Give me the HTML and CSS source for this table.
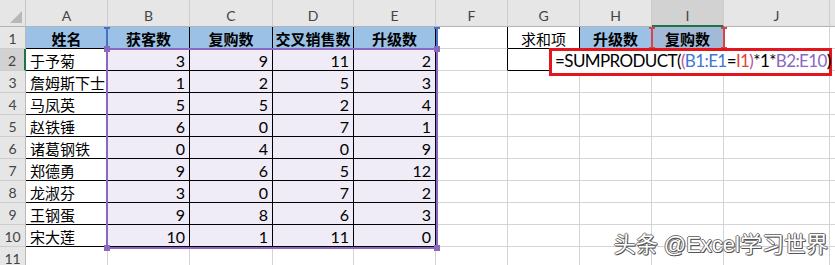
FILE: index.html
```html
<!DOCTYPE html>
<html lang="zh-CN">
<head>
<meta charset="utf-8">
<title>Sheet</title>
<link rel="stylesheet" href="styles.css">
</head>
<body>
<div class="sheet">
  <div class="corner"></div>
  <div class="ch">A</div><div class="ch">B</div><div class="ch">C</div><div class="ch">D</div><div class="ch">E</div><div class="ch">F</div><div class="ch">G</div><div class="ch">H</div><div class="ch sel">I</div><div class="ch">J</div><div class="ch">K</div>

  <div class="rh">1</div>
  <div class="c t hd">姓名</div><div class="c t hd">获客数</div><div class="c t hd">复购数</div><div class="c t hd">交叉销售数</div><div class="c t hd">升级数</div>
  <div class="c br"></div><div class="c t ctr">求和项</div><div class="c t hd">升级数</div><div class="c t hd hd2">复购数</div><div class="c"></div><div class="c"></div>

  <div class="rh sel">2</div>
  <div class="c t nm">于予菊</div><div class="c t n">3</div><div class="c t n">9</div><div class="c t n">11</div><div class="c t n">2</div>
  <div class="c br"></div><div class="c bb"></div><div class="c bb"></div><div class="c bb"></div><div class="c"></div><div class="c"></div>

  <div class="rh">3</div>
  <div class="c t nm">詹姆斯下士</div><div class="c t n">1</div><div class="c t n">2</div><div class="c t n">5</div><div class="c t n">3</div>
  <div class="c"></div><div class="c"></div><div class="c"></div><div class="c"></div><div class="c"></div><div class="c"></div>

  <div class="rh">4</div>
  <div class="c t nm">马凤英</div><div class="c t n">5</div><div class="c t n">5</div><div class="c t n">2</div><div class="c t n">4</div>
  <div class="c"></div><div class="c"></div><div class="c"></div><div class="c"></div><div class="c"></div><div class="c"></div>

  <div class="rh">5</div>
  <div class="c t nm">赵铁锤</div><div class="c t n">6</div><div class="c t n">0</div><div class="c t n">7</div><div class="c t n">1</div>
  <div class="c"></div><div class="c"></div><div class="c"></div><div class="c"></div><div class="c"></div><div class="c"></div>

  <div class="rh">6</div>
  <div class="c t nm">诸葛钢铁</div><div class="c t n">0</div><div class="c t n">4</div><div class="c t n">0</div><div class="c t n">9</div>
  <div class="c"></div><div class="c"></div><div class="c"></div><div class="c"></div><div class="c"></div><div class="c"></div>

  <div class="rh">7</div>
  <div class="c t nm">郑德勇</div><div class="c t n">9</div><div class="c t n">6</div><div class="c t n">5</div><div class="c t n">12</div>
  <div class="c"></div><div class="c"></div><div class="c"></div><div class="c"></div><div class="c"></div><div class="c"></div>

  <div class="rh">8</div>
  <div class="c t nm">龙淑芬</div><div class="c t n">3</div><div class="c t n">0</div><div class="c t n">7</div><div class="c t n">2</div>
  <div class="c"></div><div class="c"></div><div class="c"></div><div class="c"></div><div class="c"></div><div class="c"></div>

  <div class="rh">9</div>
  <div class="c t nm">王钢蛋</div><div class="c t n">9</div><div class="c t n">8</div><div class="c t n">6</div><div class="c t n">3</div>
  <div class="c"></div><div class="c"></div><div class="c"></div><div class="c"></div><div class="c"></div><div class="c"></div>

  <div class="rh">10</div>
  <div class="c t nm">宋大莲</div><div class="c t n">10</div><div class="c t n">1</div><div class="c t n">11</div><div class="c t n">0</div>
  <div class="c"></div><div class="c"></div><div class="c"></div><div class="c"></div><div class="c"></div><div class="c"></div>

  <div class="rh">11</div>
  <div class="c"></div><div class="c"></div><div class="c"></div><div class="c"></div><div class="c"></div>
  <div class="c"></div><div class="c"></div><div class="c"></div><div class="c"></div><div class="c"></div><div class="c"></div>

  <div class="ref ref-blue"><span class="h h-tl"></span><span class="h h-tr"></span></div>
  <div class="ref ref-purple"><span class="sq sq-tl"></span><span class="sq sq-tr"></span><span class="sq sq-bl"></span><span class="sq sq-br"></span></div>
  <div class="ref ref-red"><span class="h h-tl"></span><span class="h h-tr"></span><span class="h h-bl"></span><span class="h h-br"></span></div>

  <div class="editor"><span>=SUMPRODUCT(</span><span class="pp">(</span><span class="rb">B1:E1</span><span>=</span><span class="rr">I1</span><span class="pp">)</span><span>*1*</span><span class="rp">B2:E10</span><span>)</span><span class="caret"></span></div>

  <div class="wm">头条 @Excel学习世界</div>
</div>
</body>
</html>
```
FILE: styles.css
```css
* { box-sizing: border-box; }
html, body { margin: 0; padding: 0; background: #fff; }
body { width: 835px; height: 265px; overflow: hidden; }

.sheet {
  position: relative;
  display: grid;
  grid-template-columns: 26px 82px 82px 83px 81px 82px 72px 72px 72px 72px 106px 20px;
  grid-template-rows: 27px repeat(11, 22px);
  width: 835px;
  height: 265px;
  overflow: hidden;
  font-family: Lato, "Noto Sans CJK SC", sans-serif;
  color: #000;
}

.corner {
  position: relative;
  background: #e6e6e6;
  border-right: 1px solid #c6c6c6;
  border-bottom: 1px solid #b4b4b4;
}
.corner::after {
  content: "";
  position: absolute;
  right: 3px;
  bottom: 3px;
  width: 0;
  height: 0;
  border-left: 12px solid transparent;
  border-bottom: 12px solid #b7b7b7;
}

.ch {
  background: #e6e6e6;
  border-right: 1px solid #cdcdcd;
  border-bottom: 1px solid #b4b4b4;
  display: flex;
  align-items: flex-end;
  justify-content: center;
  padding-bottom: 2px;
  font-size: 14px;
  color: #444;
}
.ch.sel {
  background: #d2d2d2;
  border-bottom: 2px solid #217346;
  padding-bottom: 1px;
}

.rh {
  background: #e6e6e6;
  border-right: 1px solid #b9b9b9;
  border-bottom: 1px solid #cdcdcd;
  display: flex;
  align-items: center;
  justify-content: center;
  padding-top: 2px;
  font-size: 14px;
  color: #444;
}
.rh.sel {
  background: #d2d2d2;
  border-right: 2px solid #217346;
}

.c {
  border-right: 1px solid #d4d4d4;
  border-bottom: 1px solid #d4d4d4;
  display: flex;
  align-items: center;
  padding: 1px 4px 0;
  font-size: 15px;
  white-space: nowrap;
  overflow: hidden;
}
.t { border-right-color: #000; border-bottom-color: #000; }
.br { border-right-color: #000; }
.bb { border-bottom-color: #000; }
.hd {
  background: #9bc2e6;
  font-weight: 700;
  justify-content: center;
}
.hd2 { background: #a3b9d8; }
.ctr { justify-content: center; }
.nm { justify-content: flex-start; }
.n {
  background: #efecf7;
  justify-content: flex-end;
  font-size: 16px;
}

/* range reference highlights */
.ref { position: absolute; pointer-events: none; }
.ref-blue {
  left: 106px; top: 27px; width: 332px; height: 22px;
  border-left: 2px solid #4472c4;
  border-right: 2px solid #4472c4;
}
.ref-blue .h { position: absolute; background: #4472c4; width: 6px; height: 2px; }
.ref-purple {
  left: 106px; top: 48px; width: 332px; height: 201px;
  border: 2px solid #8a67c3;
}
.sq { position: absolute; width: 6px; height: 6px; background: #8a67c3; }
.sq-tl { left: -4px; top: -4px; }
.sq-tr { right: -4px; top: -4px; }
.sq-bl { left: -4px; bottom: -4px; }
.sq-br { right: -4px; bottom: -4px; }
.ref-red {
  left: 651px; top: 27px; width: 74px; height: 22px;
  border-left: 2px solid #d8424a;
  border-right: 2px solid #d8424a;
}
.ref-red .h { position: absolute; background: #d8424a; width: 6px; height: 2px; }
.h-tl { left: -4px; top: 0; }
.h-tr { right: -4px; top: 0; }
.h-bl { left: -4px; bottom: 0; }
.h-br { right: -4px; bottom: 0; }

/* in-cell formula editor */
.editor {
  position: absolute;
  left: 549px;
  top: 48px;
  width: 283px;
  height: 28px;
  background: #fff;
  border: 3px solid #e3161e;
  display: flex;
  align-items: center;
  padding: 0 0 3px 3px;
  font-size: 17px;
  letter-spacing: -0.6px;
  white-space: nowrap;
  color: #000;
}
.pp { color: #c0509e; }
.rb { color: #3b78d4; }
.rr { color: #e0453c; }
.rp { color: #8a67c3; }
.caret {
  display: inline-block;
  width: 1px;
  height: 18px;
  background: #000;
  margin-left: 3px;
}

.wm {
  position: absolute;
  right: 7px;
  bottom: 7px;
  font-family: "Liberation Sans", "Noto Sans CJK SC", sans-serif;
  font-size: 22px;
  color: #fff;
  white-space: nowrap;
  text-shadow: 1px 1px 0 #555, -1px 0 0 #777, 0 -1px 0 #777, 1px 0 0 #666, 0 1px 0 #666;
}
```
